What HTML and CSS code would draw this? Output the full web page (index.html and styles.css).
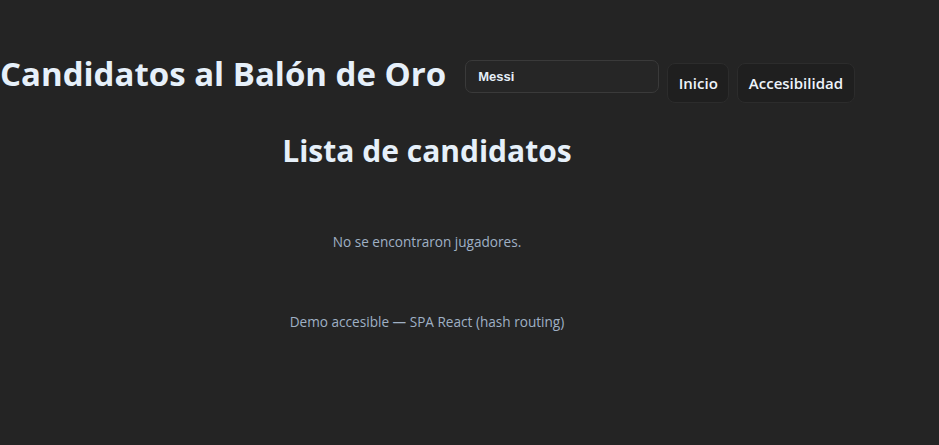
FILE: index.html
```html
<!DOCTYPE html>
<html lang="es">
<head>
<meta charset="utf-8">
<title>Candidatos al Balón de Oro</title>
<link rel="stylesheet" href="styles.css">
</head>
<body>
<div class="app">
  <header class="header">
    <h1 class="title">Candidatos al Balón de Oro</h1>
    <input class="search" type="text" value="Messi" aria-label="Buscar jugador">
    <nav class="nav">
      <button class="btn">Inicio</button>
      <button class="btn">Accesibilidad</button>
    </nav>
  </header>
  <main class="main">
    <h2 class="subtitle">Lista de candidatos</h2>
    <p class="empty">No se encontraron jugadores.</p>
  </main>
  <footer class="footer">Demo accesible — SPA React (hash routing)</footer>
</div>
</body>
</html>
```
FILE: styles.css
```css
html, body {
  margin: 0;
  background: #242424;
}
body {
  font-family: "Open Sans", "Noto Sans", sans-serif;
  color: #e6f0fa;
}
.app {
  width: 854px;
  text-align: center;
}
.header {
  display: flex;
  align-items: flex-start;
  padding-top: 52px;
}
.title {
  margin: 0;
  font-size: 33px;
  font-weight: 700;
  line-height: 44px;
  white-space: nowrap;
}
.search {
  margin: 8px 0 0 19px;
  width: 194px;
  height: 33px;
  box-sizing: border-box;
  padding: 0 12px;
  background: #262626;
  border: 1px solid #3a3a3a;
  border-radius: 7px;
  color: #e6f0fa;
  font-family: "Liberation Sans", Arial, sans-serif;
  font-weight: 700;
  font-size: 13px;
  outline: none;
}
.nav {
  display: flex;
  gap: 8px;
  margin: 11px 0 0 8px;
}
.btn {
  height: 40px;
  padding: 0 10.5px;
  background: #1f1f1f;
  border: 1px solid #2c2c2c;
  border-radius: 8px;
  color: #eef4fb;
  font-family: "Open Sans", "Noto Sans", sans-serif;
  font-size: 15px;
  font-weight: 600;
}
.main {
  padding-top: 28px;
}
.subtitle {
  margin: 0;
  font-size: 30px;
  font-weight: 700;
  line-height: 40px;
}
.empty {
  margin: 61px 0 0;
  font-size: 13.6px;
  color: #9fb0c4;
}
.footer {
  margin-top: 61px;
  font-size: 13.6px;
  color: #9fb0c4;
}
```
